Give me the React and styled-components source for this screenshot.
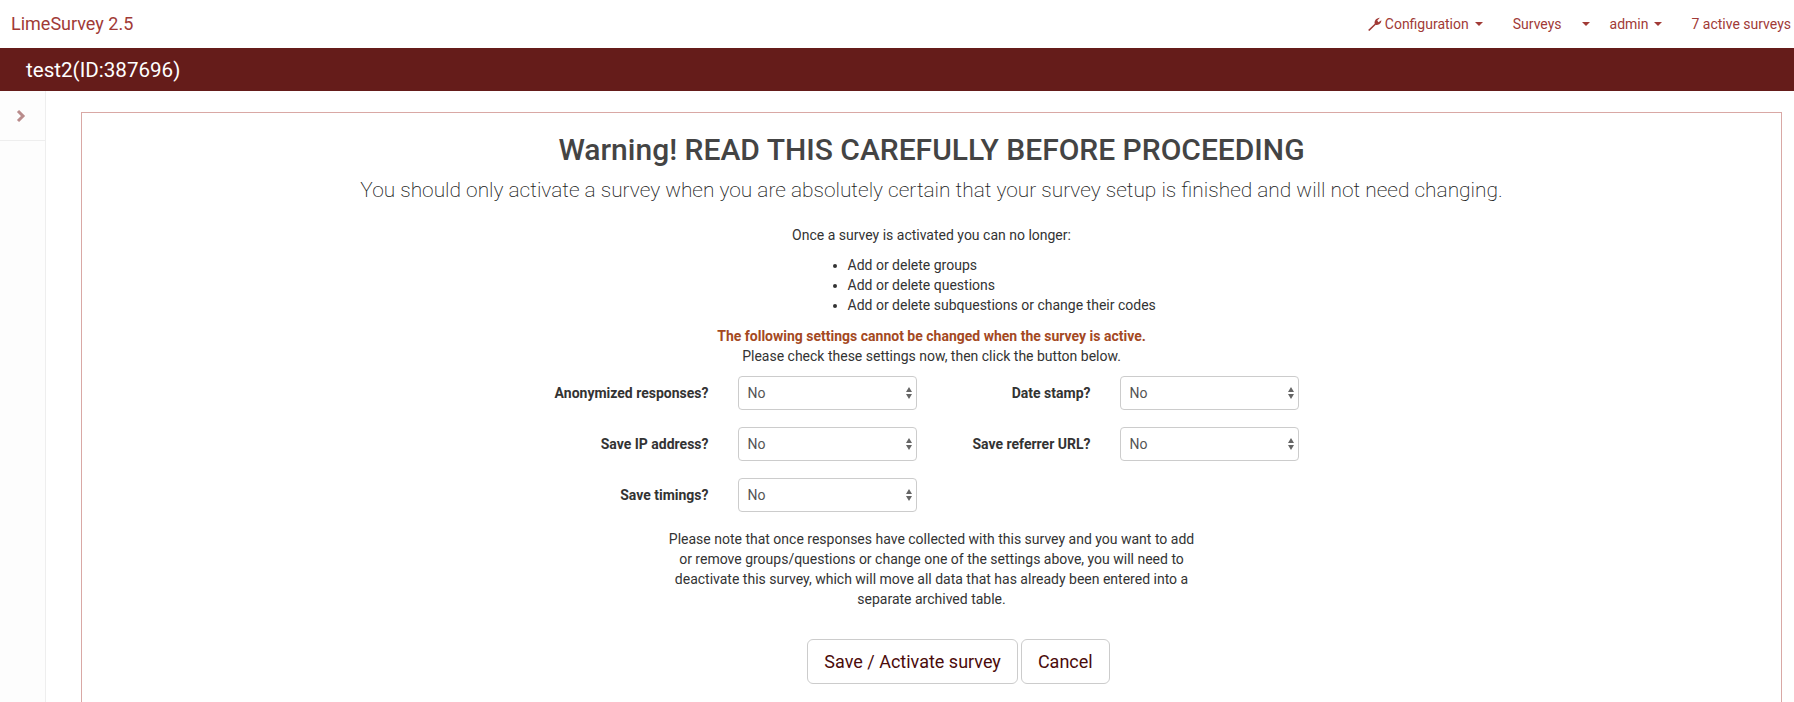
import React from "react";
import styled, { createGlobalStyle } from "styled-components";

const GlobalStyle = createGlobalStyle`
  html, body {
    margin: 0;
    padding: 0;
    background: #fff;
    overflow: hidden;
  }
  body {
    font-family: Roboto, "Liberation Sans", sans-serif;
    font-size: 14px;
    line-height: 20px;
    color: #333;
  }
`;

const Page = styled.div`
  width: 1794px;
  height: 702px;
  display: flex;
  flex-direction: column;
  overflow: hidden;
`;

const Navbar = styled.nav`
  height: 48px;
  flex: none;
  display: flex;
  align-items: center;
  justify-content: space-between;
  padding: 0 3px 0 11px;
  color: #a13a36;
`;

const Brand = styled.div`
  font-size: 18px;
`;

const NavList = styled.div`
  display: flex;
  align-items: center;
`;

const NavItem = styled.div`
  display: flex;
  align-items: center;
  font-size: 14px;
  margin-left: ${(p) => p.$left || 0}px;
`;

const WrenchIcon = styled.svg`
  width: 15px;
  height: 14px;
  margin-right: 3px;
`;

const Caret = styled.span`
  width: 0;
  height: 0;
  margin-left: ${(p) => p.$left || 6}px;
  border-top: 4px solid #a13a36;
  border-left: 4px solid transparent;
  border-right: 4px solid transparent;
`;

const TitleBar = styled.div`
  height: 43px;
  flex: none;
  background: #651c1a;
  color: #fff;
  font-size: 20.6px;
  display: flex;
  align-items: center;
  padding-left: 26px;
`;

const Main = styled.div`
  flex: 1;
  display: flex;
  min-height: 0;
`;

const Sidebar = styled.aside`
  width: 45px;
  flex: none;
  background: #fdfdfd;
  border-right: 1px solid #eee;
`;

const SideToggle = styled.div`
  height: 50px;
  border-bottom: 1px solid #eee;
  display: flex;
  justify-content: center;
  padding: 18px 3px 0 0;
  box-sizing: border-box;
`;

const ChevronIcon = styled.svg`
  width: 10px;
  height: 14px;
`;

const Content = styled.main`
  flex: 1;
  padding: 21px 12px 0 35px;
`;

const Panel = styled.section`
  border: 1px solid #d9a8a5;
  border-bottom: 0;
  height: 100%;
  box-sizing: border-box;
  padding-top: 19px;
  display: flex;
  flex-direction: column;
  align-items: center;
  text-align: center;
`;

const Heading = styled.h2`
  margin: 0;
  font-size: 30px;
  line-height: 36px;
  font-weight: 500;
  color: #444;
`;

const Lead = styled.p`
  margin: 7px 0 0;
  font-size: 20.88px;
  line-height: 30px;
  font-weight: 200;
  color: #222;
`;

const Intro = styled.p`
  margin: 20px 0 0;
`;

const Bullets = styled.ul`
  margin: 10px 0 0 104px;
  padding: 0 0 0 40px;
  text-align: left;
  width: 352px;
  box-sizing: border-box;
`;

const Alert = styled.div`
  margin-top: 11px;
  font-weight: 700;
  color: #a4491f;
`;

const FormGrid = styled.div`
  margin: 10px 2px 0 0;
  display: grid;
  grid-template-columns: 146px 179px 145px 179px;
  column-gap: 29px;
  row-gap: 17px;
  align-items: center;
`;

const FieldLabel = styled.label`
  font-weight: 700;
  text-align: right;
  white-space: nowrap;
  justify-self: end;
`;

const SelectWrap = styled.div`
  position: relative;
  height: 34px;
`;

const Select = styled.select`
  appearance: none;
  width: 100%;
  height: 100%;
  box-sizing: border-box;
  padding: 0 9px;
  background: #fff;
  border: 1px solid #ccc;
  border-radius: 4px;
  font-family: inherit;
  font-size: 14px;
  color: #555;
`;

const SelectArrows = styled.svg`
  position: absolute;
  right: 5px;
  top: 11px;
  width: 6px;
  height: 12px;
  pointer-events: none;
`;

const Note = styled.p`
  margin: 17px 0 0;
  width: 540px;
`;

const Actions = styled.div`
  margin: 30px 0 0 54px;
  display: flex;
  gap: 3px;
`;

const Button = styled.button`
  height: 45px;
  padding: 0 16px;
  background: #fff;
  border: 1px solid #ccc;
  border-radius: 6px;
  font-family: inherit;
  font-size: 18px;
  color: #4b0b0b;
`;

function Field({ label }) {
  return (
    <>
      <FieldLabel>{label}</FieldLabel>
      <SelectWrap>
        <Select defaultValue="N">
          <option value="N">No</option>
          <option value="Y">Yes</option>
        </Select>
        <SelectArrows viewBox="0 0 6 12">
          <path d="M3 0 L6 5 L0 5 Z M0 7 L6 7 L3 12 Z" fill="#666" />
        </SelectArrows>
      </SelectWrap>
    </>
  );
}

export default function App() {
  return (
    <Page>
      <GlobalStyle />
      <Navbar>
        <Brand>LimeSurvey 2.5</Brand>
        <NavList>
          <NavItem>
            <WrenchIcon viewBox="0 0 14 13">
              <path
                d="M1 12 L7.2 6.2 C6.6 3.6 8.4 0.8 12 0.6 L9.6 3.2 L10.6 4.8 L13.4 3 C13.4 6 10.6 8 8.2 7.2 L2.2 13 Z"
                fill="#a13a36"
              />
            </WrenchIcon>
            Configuration
            <Caret />
          </NavItem>
          <NavItem $left={30}>
            Surveys
            <Caret $left={20} />
          </NavItem>
          <NavItem $left={20}>
            admin
            <Caret />
          </NavItem>
          <NavItem $left={29}>7 active surveys</NavItem>
        </NavList>
      </Navbar>
      <TitleBar>test2(ID:387696)</TitleBar>
      <Main>
        <Sidebar>
          <SideToggle>
            <ChevronIcon viewBox="0 0 10 14">
              <path d="M2 2 L7 7 L2 12" fill="none" stroke="#b98c8c" strokeWidth="3" />
            </ChevronIcon>
          </SideToggle>
        </Sidebar>
        <Content>
          <Panel>
            <Heading>Warning! READ THIS CAREFULLY BEFORE PROCEEDING</Heading>
            <Lead>
              You should only activate a survey when you are absolutely certain
              that your survey setup is finished and will not need changing.
            </Lead>
            <Intro>Once a survey is activated you can no longer:</Intro>
            <Bullets>
              <li>Add or delete groups</li>
              <li>Add or delete questions</li>
              <li>Add or delete subquestions or change their codes</li>
            </Bullets>
            <Alert>The following settings cannot be changed when the survey is active.</Alert>
            <div>Please check these settings now, then click the button below.</div>
            <FormGrid>
              <Field label="Anonymized responses?" />
              <Field label="Date stamp?" />
              <Field label="Save IP address?" />
              <Field label="Save referrer URL?" />
              <Field label="Save timings?" />
            </FormGrid>
            <Note>
              Please note that once responses have collected with this survey and
              you want to add or remove groups/questions or change one of the
              settings above, you will need to deactivate this survey, which will
              move all data that has already been entered into a separate archived
              table.
            </Note>
            <Actions>
              <Button>Save / Activate survey</Button>
              <Button>Cancel</Button>
            </Actions>
          </Panel>
        </Content>
      </Main>
    </Page>
  );
}
